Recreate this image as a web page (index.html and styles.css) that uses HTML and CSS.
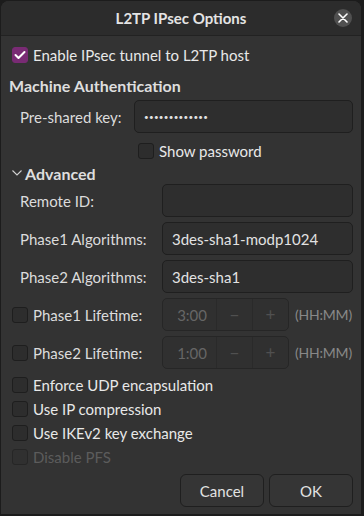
FILE: index.html
```html
<!DOCTYPE html>
<html lang="en">
<head>
    <meta charset="UTF-8">
    <title>L2TP IPsec Options</title>
    <link rel="stylesheet" href="styles.css">
</head>
<body>
<div class="window">
    <div class="titlebar">
        <span class="title">L2TP IPsec Options</span>
        <span class="close-btn">
            <svg width="10" height="10" viewBox="0 0 10 10"><path d="M1 1L9 9M9 1L1 9" stroke="#fff" stroke-width="1.6" stroke-linecap="round"/></svg>
        </span>
    </div>
    <div class="content">
        <label class="check-row row-top">
            <span class="checkbox checked">
                <svg width="12" height="10" viewBox="0 0 12 10"><path d="M1.5 5L4.5 8L10.5 2" fill="none" stroke="#fff" stroke-width="2" stroke-linecap="round" stroke-linejoin="round"/></svg>
            </span>
            Enable IPsec tunnel to L2TP host
        </label>
        <div class="heading">Machine Authentication</div>
        <div class="field-row">
            <span class="label label-psk">Pre-shared key:</span>
            <span class="entry entry-psk">&bull;&bull;&bull;&bull;&bull;&bull;&bull;&bull;&bull;&bull;&bull;&bull;&bull;</span>
        </div>
        <label class="check-row show-pass">
            <span class="checkbox"></span>
            Show password
        </label>
        <div class="heading expander">
            <svg width="10" height="6" viewBox="0 0 10 6"><path d="M0.5 0.5L5 5L9.5 0.5" fill="none" stroke="#cfcfcf" stroke-width="1.1"/></svg>
            Advanced
        </div>
        <div class="advanced">
            <div class="field-row">
                <span class="label">Remote ID:</span>
                <span class="entry"></span>
            </div>
            <div class="field-row">
                <span class="label">Phase1 Algorithms:</span>
                <span class="entry">3des-sha1-modp1024</span>
            </div>
            <div class="field-row">
                <span class="label">Phase2 Algorithms:</span>
                <span class="entry">3des-sha1</span>
            </div>
            <div class="field-row lifetime">
                <label class="check-inline"><span class="checkbox"></span>Phase1 Lifetime:</label>
                <span class="spin">
                    <span class="spin-value">3:00</span>
                    <span class="spin-btn">&minus;</span>
                    <span class="spin-btn">+</span>
                </span>
                <span class="unit">(HH:MM)</span>
            </div>
            <div class="field-row lifetime">
                <label class="check-inline"><span class="checkbox"></span>Phase2 Lifetime:</label>
                <span class="spin">
                    <span class="spin-value">1:00</span>
                    <span class="spin-btn">&minus;</span>
                    <span class="spin-btn">+</span>
                </span>
                <span class="unit">(HH:MM)</span>
            </div>
        </div>
        <div class="options">
            <label class="check-row"><span class="checkbox"></span>Enforce UDP encapsulation</label>
            <label class="check-row"><span class="checkbox"></span>Use IP compression</label>
            <label class="check-row"><span class="checkbox"></span>Use IKEv2 key exchange</label>
            <label class="check-row disabled"><span class="checkbox"></span>Disable PFS</label>
        </div>
        <div class="actions">
            <button class="button">Cancel</button>
            <button class="button">OK</button>
        </div>
    </div>
</div>
</body>
</html>
```

FILE: styles.css
```css
body {
    margin: 0;
    padding: 0;
    background-color: #1c1c1c;
    font-family: Lato, "Noto Sans", sans-serif;
    font-size: 15px;
    color: #e8e8e8;
}
.window {
    margin: 1px 0 0 1px;
    width: 360px;
    height: 513px;
    background-color: #333333;
    border-radius: 8px 8px 0 0;
    overflow: hidden;
}
.titlebar {
    height: 34px;
    border-bottom: 1px solid #222222;
    background-color: #2c2c2c;
    display: flex;
    align-items: center;
    justify-content: center;
    position: relative;
}
.title {
    font-weight: bold;
    font-size: 15px;
    color: #e4e4e4;
}
.close-btn {
    position: absolute;
    right: 9px;
    top: 8px;
    width: 18px;
    height: 18px;
    border-radius: 50%;
    background-color: #505050;
    display: flex;
    align-items: center;
    justify-content: center;
}
.content {
    padding: 4px 8px 0 11px;
}
.check-row {
    display: flex;
    align-items: center;
    height: 24px;
    gap: 5px;
}
.row-top {
    height: 30px;
}
.checkbox {
    width: 14px;
    height: 14px;
    border: 1px solid #1e1e1e;
    border-radius: 3px;
    background-color: #2d2d2d;
    display: flex;
    align-items: center;
    justify-content: center;
    flex-shrink: 0;
}
.checkbox.checked {
    background-color: #792b74;
    border-color: #792b74;
}
.heading {
    height: 30px;
    display: flex;
    align-items: center;
    font-weight: bold;
    font-size: 16px;
    color: #dedede;
    margin-left: -3px;
}
.field-row {
    display: flex;
    align-items: center;
    height: 33px;
}
.label {
    box-sizing: border-box;
    width: 150px;
    flex-shrink: 0;
    padding-left: 8px;
    color: #dcdcdc;
}
.label-psk {
    width: 122px;
}
.entry {
    flex: 1;
    height: 33px;
    box-sizing: border-box;
    border: 1px solid #1f1f1f;
    border-radius: 5px;
    background-color: #2e2e2e;
    display: flex;
    align-items: center;
    padding-left: 9px;
    color: #e2e2e2;
}
.entry-psk {
    font-size: 8px;
    letter-spacing: 0.3px;
}
.show-pass {
    margin-top: 5px;
    height: 25px;
    padding-left: 126px;
}
.expander {
    height: 20px;
    gap: 3px;
    margin-left: 0;
}
.advanced {
    margin-top: 1px;
    display: flex;
    flex-direction: column;
    gap: 5px;
}
.check-inline {
    width: 150px;
    flex-shrink: 0;
    display: flex;
    align-items: center;
    gap: 5px;
    color: #dcdcdc;
}
.spin {
    width: 127px;
    height: 33px;
    flex-shrink: 0;
    box-sizing: border-box;
    border: 1px solid #262626;
    border-radius: 5px;
    background-color: #303030;
    display: flex;
    color: #666666;
}
.spin-value {
    flex: 1;
    display: flex;
    align-items: center;
    justify-content: flex-end;
    padding-right: 9px;
}
.spin-btn {
    width: 35px;
    border-left: 1px solid #2a2a2a;
    display: flex;
    align-items: center;
    justify-content: center;
    color: #505050;
    font-size: 17px;
}
.unit {
    margin-left: 6px;
    white-space: nowrap;
    font-size: 14px;
    letter-spacing: -0.2px;
    color: #888888;
}
.options {
    margin-top: 4px;
}
.disabled {
    color: #5c5c5c;
}
.disabled .checkbox {
    background-color: #303030;
    border-color: #262626;
}
.actions {
    margin-top: 5px;
    display: flex;
    justify-content: flex-end;
    gap: 5px;
}
.button {
    width: 84px;
    height: 33px;
    border: 1px solid #1f1f1f;
    border-radius: 6px;
    background-color: #353535;
    color: #e2e2e2;
    font-family: Lato, "Noto Sans", sans-serif;
    font-size: 15px;
}
```
